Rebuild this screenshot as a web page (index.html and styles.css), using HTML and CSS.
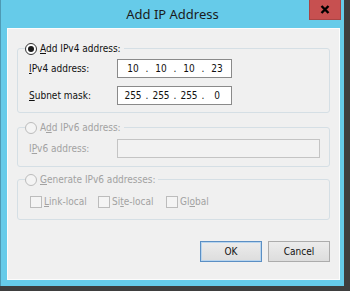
FILE: index.html
```html
<!DOCTYPE html>
<html lang="en">

<head>
    <meta charset="UTF-8">
    <meta name="viewport" content="width=device-width, initial-scale=1.0">
    <title>Add IP Address</title>
    <link rel="stylesheet" href="styles.css">
</head>

<body>
    <div class="window">
        <div class="titlebar">
            <span></span>
            <h1 class="title">Add IP Address</h1>
            <button class="close" aria-label="Close">
                <svg width="10" height="9" viewBox="0 0 10 9">
                    <path d="M1.5 1 L8.5 8 M8.5 1 L1.5 8" stroke="#000" stroke-width="2.4" fill="none" />
                </svg>
            </button>
        </div>
        <div class="client">
            <fieldset class="group group_v4">
                <legend><span class="radio checked"></span><span><u>A</u>dd IPv4 address:</span></legend>
                <div class="rows">
                    <label><u>I</u>Pv4 address:</label>
                    <div class="ipbox">
                        <span>10</span><i>.</i><span>10</span><i>.</i><span>10</span><i>.</i><span>23</span>
                    </div>
                    <label><u>S</u>ubnet mask:</label>
                    <div class="ipbox">
                        <span>255</span><i>.</i><span>255</span><i>.</i><span>255</span><i>.</i><span>0</span>
                    </div>
                </div>
            </fieldset>

            <fieldset class="group group_v6 disabled">
                <legend><span class="radio"></span><span>A<u>d</u>d IPv6 address:</span></legend>
                <div class="rows">
                    <label>I<u>P</u>v6 address:</label>
                    <div class="ipbox wide"></div>
                </div>
            </fieldset>

            <fieldset class="group group_gen disabled">
                <legend><span class="radio"></span><span><u>G</u>enerate IPv6 addresses:</span></legend>
                <div class="checks">
                    <label class="check"><span class="box"></span><span><u>L</u>ink-local</span></label>
                    <label class="check"><span class="box"></span><span>Si<u>t</u>e-local</span></label>
                    <label class="check"><span class="box"></span><span>Gl<u>o</u>bal</span></label>
                </div>
            </fieldset>

            <div class="buttons">
                <button class="btn default">OK</button>
                <button class="btn">Cancel</button>
            </div>
        </div>
    </div>
</body>

</html>
```

FILE: styles.css
```css
* {
    box-sizing: border-box;
}

body {
    margin: 0;
    background: #3e3e3e;
    font-family: "DejaVu Sans Condensed", "Liberation Sans", sans-serif;
    font-size: 10px;
    color: #111;
}

.window {
    width: 344px;
    height: 286px;
    background: #66cbe9;
    border-left: 1px solid #4e9ab4;
}

.titlebar {
    display: grid;
    grid-template-columns: 1fr auto 1fr;
    height: 28px;
}

.title {
    margin: 0;
    font-family: "Noto Sans", sans-serif;
    font-weight: normal;
    font-size: 13px;
    line-height: 28px;
    color: #1b1b1b;
}

.close {
    justify-self: end;
    align-self: start;
    width: 32px;
    height: 20px;
    margin: 0 3px 0 0;
    padding: 0;
    background: #c75050;
    border: 1px solid #a84444;
    border-top: 0;
    display: flex;
    align-items: center;
    justify-content: center;
}

.client {
    width: 333px;
    height: 252px;
    margin-left: 6px;
    padding: 0 9px;
    background: #f0f0f0;
    border: 1px solid #fcfcfc;
}

.group {
    margin: 0;
    padding: 0;
    min-width: 0;
    border: 1px solid #d5dfe5;
    border-radius: 3px;
}

.group legend {
    display: flex;
    align-items: center;
    gap: 3px;
    height: 13px;
    margin-left: 7px;
    padding: 0 3px 0 0;
}

.group_v4 {
    margin-top: 13px;
}

.group_v6 {
    margin-top: 8px;
}

.group_gen {
    margin-top: 6px;
}

.radio {
    width: 12px;
    height: 12px;
    border: 1px solid #333;
    border-radius: 50%;
    background: #fff;
    display: flex;
    align-items: center;
    justify-content: center;
}

.radio.checked::after {
    content: "";
    width: 6px;
    height: 6px;
    border-radius: 50%;
    background: #1a1a1a;
}

.rows {
    display: grid;
    grid-template-columns: 88px auto;
    align-items: center;
    row-gap: 8px;
    padding: 4px 0 7px 11px;
}

.group_v6 .rows {
    padding: 5px 0 8px 11px;
}

.ipbox {
    width: 115px;
    height: 19px;
    display: flex;
    align-items: center;
    padding: 0 1px 0 4px;
    background: #fff;
    border: 1px solid #8a8a8a;
}

.ipbox span {
    width: 22px;
    text-align: center;
}

.ipbox i {
    width: 6px;
    font-style: normal;
    text-align: center;
}

.ipbox.wide {
    width: 203px;
    background: #f2f2f2;
    border-color: #c4c4c4;
}

.disabled {
    color: #a2a2a2;
}

.disabled .radio {
    border-color: #bcbcbc;
    background: #f4f4f4;
}

.checks {
    display: flex;
    padding: 9px 0 11px 12px;
}

.check {
    width: 68px;
    display: flex;
    align-items: center;
    gap: 2px;
    height: 13px;
}

.box {
    width: 12px;
    height: 12px;
    border: 1px solid #bcbcbc;
    background: #f4f4f4;
}

.buttons {
    display: flex;
    justify-content: flex-end;
    gap: 6px;
    margin-top: 21px;
}

.btn {
    width: 62px;
    height: 21px;
    padding: 0;
    font-family: inherit;
    font-size: 10px;
    color: #111;
    background: linear-gradient(#ececec, #dddddd);
    border: 1px solid #acacac;
}

.btn.default {
    border-color: #5b8fc4;
    box-shadow: inset 0 0 0 1px #b9d5ee;
}
```
